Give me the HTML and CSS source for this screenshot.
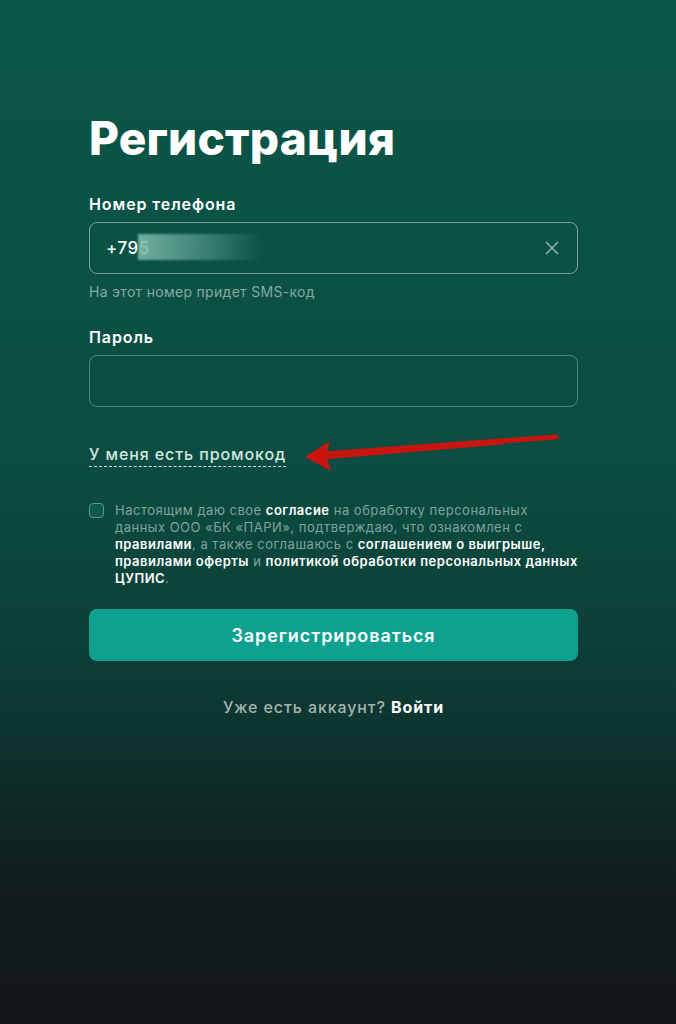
FILE: index.html
```html
<!DOCTYPE html>
<html lang="ru">
<head>
    <meta charset="UTF-8">
    <title>Регистрация</title>
    <link rel="stylesheet" href="styles.css">
</head>
<body>
    <div class="panel">
        <h1>Регистрация</h1>
        <form id="reg-form">
            <div class="form-group">
                <label for="phone">Номер телефона</label>
                <div class="field">
                    <span class="phone-value">+795<span class="blur"></span></span>
                    <svg class="clear" width="14" height="14" viewBox="0 0 14 14">
                        <path d="M1 1L13 13M13 1L1 13" stroke="#8fb3aa" stroke-width="1.5" fill="none"/>
                    </svg>
                </div>
                <div class="hint">На этот номер придет SMS-код</div>
            </div>
            <div class="form-group">
                <label for="password">Пароль</label>
                <div class="field"></div>
            </div>
            <div class="promo-row">
                <span class="promo">У меня есть промокод</span>
                <svg class="arrow" width="260" height="40" viewBox="0 0 260 40">
                    <path d="M2 24 L27 8 L23 23 L28 38 Z" fill="#c8150f"/>
                    <path d="M20 21 L253 4" stroke="#c8150f" stroke-width="5" stroke-linecap="round"/>
                    <path d="M20 25 L200 10" stroke="#c8150f" stroke-width="3" stroke-linecap="round"/>
                </svg>
            </div>
            <div class="consent">
                <span class="checkbox"></span>
                <p>Настоящим даю свое <b>согласие</b> на обработку персональных<br>данных ООО «БК «ПАРИ», подтверждаю, что ознакомлен с<br><b>правилами</b>, а также соглашаюсь с <b>соглашением о выигрыше,</b><br><b>правилами оферты</b> и <b>политикой обработки персональных данных</b><br><b>ЦУПИС</b>.</p>
            </div>
            <button type="submit">Зарегистрироваться</button>
        </form>
        <div class="login">Уже есть аккаунт? <b>Войти</b></div>
    </div>
</body>
</html>
```

FILE: styles.css
```css
body { margin: 0; min-height: 1024px; font-family: Inter, "Noto Sans", sans-serif; color: #fff; background: linear-gradient(180deg, #0a5749 0%, #0b4d42 45%, #0c3c34 66%, #0e2b28 77%, #111c1e 87%, #121619 100%); }
.panel { width: 489px; margin-left: 89px; padding-top: 110px; }
h1 { margin: 0 0 28px; font-size: 46px; line-height: 56px; font-weight: 800; letter-spacing: 0.2px; }
.form-group { margin-bottom: 27px; }
label { display: block; font-size: 16px; line-height: 20px; font-weight: 600; margin-bottom: 8px; letter-spacing: 0.9px; }
.field { position: relative; height: 50px; border: 1px solid rgba(200, 230, 222, 0.55); border-radius: 8px; display: flex; align-items: center; padding: 0 16px; }
.phone-value { font-size: 17px; font-weight: 500; position: relative; letter-spacing: 0.5px; }
.blur { position: absolute; left: 32px; top: -4px; width: 125px; height: 26px; background: linear-gradient(90deg, rgba(125, 185, 170, 0.9) 0%, rgba(95, 165, 150, 0.5) 60%, rgba(70, 140, 125, 0) 100%); filter: blur(1px); }
.clear { margin-left: auto; margin-right: 2px; }
.hint { margin-top: 9px; font-size: 14px; color: #86aaa1; letter-spacing: 0.3px; }
.form-group:nth-child(2) .field { border-color: rgba(160, 205, 195, 0.45); }
.promo-row { position: relative; margin-top: 37px; height: 22px; }
.promo { font-size: 16px; font-weight: 500; color: #d6e6e1; border-bottom: 1px dashed #d6e6e1; padding-bottom: 2px; letter-spacing: 0.9px; }
.arrow { position: absolute; left: 214px; top: -11px; }
.consent { display: flex; gap: 11px; margin-top: 36px; }
.checkbox { flex: none; width: 13px; height: 13px; border: 1.5px solid #5f9488; border-radius: 4px; background: #0f5a4d; margin-top: 1px; }
.consent p { margin: 0; font-size: 13px; line-height: 17px; color: #7fa59b; letter-spacing: 0.5px; white-space: nowrap; }
.consent b { color: #fff; font-weight: 600; }
button { display: block; width: 100%; height: 52px; margin-top: 22px; border: none; border-radius: 8px; background: #0ea190; color: #fff; font-family: inherit; font-size: 18px; font-weight: 600; letter-spacing: 0.9px; }
.login { margin-top: 36px; text-align: center; font-size: 16px; color: #a5b3b0; font-weight: 500; letter-spacing: 0.9px; }
.login b { color: #fff; font-weight: 700; }
```
